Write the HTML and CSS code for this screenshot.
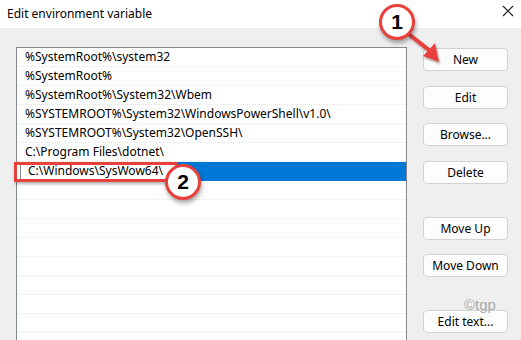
FILE: index.html
```html
<!DOCTYPE html>
<html>
<head>
<meta charset="utf-8">
<link rel="stylesheet" href="styles.css">
</head>
<body>
<div class="window">
  <div class="titlebar">
    <span class="title">Edit environment variable</span>
    <svg class="close" width="12" height="12" viewBox="0 0 12 12"><path d="M1 1 L11 11 M11 1 L1 11" stroke="#1a1a1a" stroke-width="1.1" fill="none"/></svg>
  </div>
  <div class="content">
    <div class="listbox">
      <div class="row">%SystemRoot%\system32</div>
      <div class="row">%SystemRoot%</div>
      <div class="row">%SystemRoot%\System32\Wbem</div>
      <div class="row">%SYSTEMROOT%\System32\WindowsPowerShell\v1.0\</div>
      <div class="row">%SYSTEMROOT%\System32\OpenSSH\</div>
      <div class="row">C:\Program Files\dotnet\</div>
      <div class="row selected"><div class="editbox"><span class="editbox-text">C:\Windows\SysWow64\</span></div></div>
      <div class="row"></div>
      <div class="row"></div>
      <div class="row"></div>
      <div class="row"></div>
      <div class="row"></div>
      <div class="row"></div>
      <div class="row"></div>
      <div class="row"></div>
      <div class="row"></div>
    </div>
    <div class="buttons">
      <div class="group">
        <div class="btn">New</div>
        <div class="btn">Edit</div>
        <div class="btn">Browse...</div>
        <div class="btn">Delete</div>
      </div>
      <div class="group group-move">
        <div class="btn">Move Up</div>
        <div class="btn">Move Down</div>
      </div>
      <div class="group group-text">
        <div class="btn">Edit text...</div>
      </div>
    </div>
  </div>

  <div class="highlight"></div>
  <svg class="arrow" width="40" height="34" viewBox="0 0 40 34">
    <defs>
      <filter id="sh" x="-30%" y="-30%" width="160%" height="160%">
        <feDropShadow dx="1" dy="2" stdDeviation="1.2" flood-color="#000" flood-opacity="0.35"/>
      </filter>
    </defs>
    <g filter="url(#sh)">
      <path d="M3 3 L22 18" stroke="#e8403a" stroke-width="4" stroke-linecap="round" fill="none"/>
      <path d="M16 24 L28 11 L32 30 Z" fill="#e8403a"/>
    </g>
  </svg>
  <div class="badge badge-1">1</div>
  <div class="badge badge-2">2</div>
  <div class="watermark">©tgp</div>
</div>
</body>
</html>
```
FILE: styles.css
```css
html, body {
  margin: 0;
  padding: 0;
}
body {
  width: 521px;
  height: 340px;
  overflow: hidden;
  font-family: "Noto Sans", "Open Sans", sans-serif;
  color: #000;
}
.window {
  position: relative;
  width: 521px;
  height: 340px;
  background: #efefef;
  overflow: hidden;
}
.titlebar {
  height: 28px;
  background: #fff;
  display: flex;
  align-items: center;
  justify-content: space-between;
  padding: 0 7px 0 7px;
  box-sizing: border-box;
}
.title {
  font-size: 12px;
  margin-top: -2px;
  color: #000;
}
.close {
  margin-top: -7px;
  margin-right: 0;
}
.content {
  display: flex;
  align-items: flex-start;
  padding: 19px 0 0 16px;
}
.listbox {
  width: 389px;
  height: 320px;
  border: 1px solid #828790;
  background: #fff;
  flex: none;
}
.row {
  height: 19px;
  box-sizing: border-box;
  border-bottom: 1px dotted #e6e6e6;
  font-size: 12px;
  line-height: 18px;
  padding-left: 8px;
  white-space: nowrap;
  overflow: hidden;
}
.row.selected {
  background: #0078d7;
  padding-left: 0;
  border-bottom-color: #0078d7;
}
.editbox {
  width: 160px;
  height: 18px;
  background: #fff;
  box-sizing: border-box;
  padding-left: 3px;
  display: flex;
}
.editbox-text {
  border-left: 1px solid #8a8a8a;
  padding-left: 7px;
  line-height: 16px;
  height: 16px;
  margin-top: 1px;
}
.buttons {
  margin-left: 16px;
  margin-top: 1px;
  width: 85px;
  display: flex;
  flex-direction: column;
}
.group {
  display: flex;
  flex-direction: column;
  gap: 14.5px;
}
.group-move {
  margin-top: 33.5px;
  gap: 14px;
}
.group-text {
  margin-top: 33px;
}
.btn {
  height: 23px;
  box-sizing: border-box;
  border: 1px solid #d2d2d2;
  border-radius: 4px;
  background: #fdfdfd;
  font-size: 12px;
  display: flex;
  align-items: center;
  justify-content: center;
  color: #000;
}
.highlight {
  position: absolute;
  left: 14px;
  top: 162px;
  width: 164px;
  height: 20px;
  box-sizing: border-box;
  border: 3px solid #e8403a;
  box-shadow: 1px 2px 3px rgba(0,0,0,0.3);
}
.badge {
  position: absolute;
  width: 36px;
  height: 36px;
  box-sizing: border-box;
  border: 3.5px solid #e8403a;
  border-radius: 50%;
  background: #fff;
  font-family: "Liberation Sans", Arial, sans-serif;
  font-weight: bold;
  font-size: 21px;
  display: flex;
  align-items: center;
  justify-content: center;
  box-shadow: 1px 3px 4px rgba(0,0,0,0.35);
}
.badge-1 {
  left: 379px;
  top: 4px;
}
.badge-2 {
  left: 165px;
  top: 164px;
}
.arrow {
  position: absolute;
  left: 407px;
  top: 32px;
}
.watermark {
  position: absolute;
  left: 464px;
  top: 296px;
  font-family: "Liberation Sans", Arial, sans-serif;
  font-size: 15px;
  color: #a9a9a9;
}
```
